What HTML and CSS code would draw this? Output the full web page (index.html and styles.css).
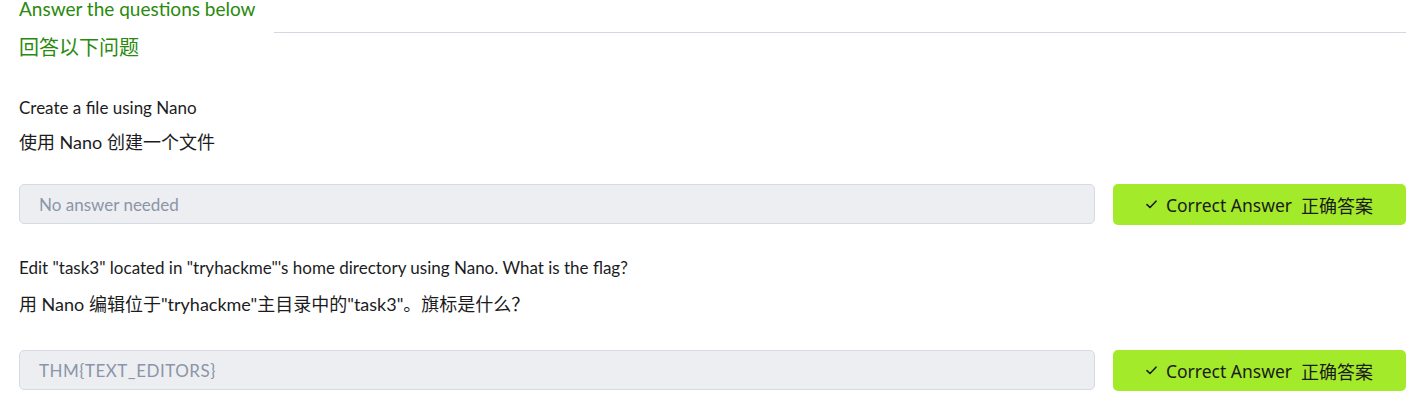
FILE: index.html
```html
<!DOCTYPE html>
<html lang="en">
<head>
<meta charset="utf-8">
<title>Answer the questions below</title>
<link rel="stylesheet" href="styles.css">
</head>
<body>
<div class="panel">
  <div class="head-row">
    <div class="head-title">Answer the questions below</div>
    <div class="head-rule"></div>
  </div>
  <div class="head-cn">回答以下问题</div>

  <div class="question q1">
    <p class="q-en">Create a file using Nano</p>
    <p class="q-cn">使用 Nano 创建一个文件</p>
    <div class="answer-row">
      <div class="answer-input placeholder">No answer needed</div>
      <button class="answer-btn" type="button">
        <svg class="check" width="11" height="9" viewBox="0 0 11 9"><path d="M1 4.6 L4 7.5 L10 1.2" fill="none" stroke="#1b1b1b" stroke-width="1.6" stroke-linecap="round" stroke-linejoin="round"/></svg>
        <span class="btn-en">Correct Answer</span><span class="btn-cn">正确答案</span>
      </button>
    </div>
  </div>

  <div class="question q2">
    <p class="q-en">Edit "task3" located in "tryhackme"'s home directory using Nano. What is the flag?</p>
    <p class="q-cn">用 Nano 编辑位于"tryhackme"主目录中的"task3"。旗标是什么？</p>
    <div class="answer-row">
      <div class="answer-input flag">THM{TEXT_EDITORS}</div>
      <button class="answer-btn" type="button">
        <svg class="check" width="11" height="9" viewBox="0 0 11 9"><path d="M1 4.6 L4 7.5 L10 1.2" fill="none" stroke="#1b1b1b" stroke-width="1.6" stroke-linecap="round" stroke-linejoin="round"/></svg>
        <span class="btn-en">Correct Answer</span><span class="btn-cn">正确答案</span>
      </button>
    </div>
  </div>
</div>
</body>
</html>
```
FILE: styles.css
```css
html, body {
  margin: 0;
  padding: 0;
  background: #ffffff;
}
body {
  font-family: "Lato", "Noto Sans CJK SC", sans-serif;
  color: #1c1c1e;
}
.panel {
  padding: 0 17px 0 19px;
}
.head-row {
  display: flex;
  align-items: flex-end;
  height: 33px;
}
.head-title {
  font-size: 19px;
  line-height: 17px;
  color: #2a8a0e;
  align-self: flex-start;
  margin-top: 0;
}
.head-rule {
  flex: 1;
  margin-left: 18px;
  border-bottom: 1px solid #d3d9e3;
}
.head-cn {
  font-size: 20px;
  line-height: 26px;
  color: #2a8a0e;
  margin-top: 1px;
}
.question {
  display: flex;
  flex-direction: column;
}
.q-en {
  margin: 0;
  font-size: 17px;
  line-height: 24px;
}
.q-cn {
  margin: 0;
  font-size: 18px;
  line-height: 26px;
}
.q1 { margin-top: 36px; }
.q1 .q-cn { margin-top: 9px; }
.q1 .answer-row { margin-top: 29px; }
.q2 { margin-top: 31px; }
.q2 .q-cn { margin-top: 11px; }
.q2 .answer-row { margin-top: 33px; }
.answer-row {
  display: flex;
  gap: 18px;
}
.answer-input {
  flex: 1;
  height: 40px;
  box-sizing: border-box;
  background: #eceef2;
  border: 1px solid #d6dbe3;
  border-radius: 5px;
  padding: 0 19px;
  display: flex;
  align-items: center;
  font-size: 17px;
  color: #8b95a7;
}
.answer-input.flag {
  letter-spacing: 0.5px;
}
.answer-btn {
  width: 293px;
  height: 41px;
  box-sizing: border-box;
  border: none;
  border-radius: 5px;
  background: #a3ea2a;
  display: flex;
  align-items: center;
  justify-content: center;
  font-family: "Noto Sans", "Noto Sans CJK SC", sans-serif;
  color: #1b1b1b;
  padding: 0;
  cursor: pointer;
}
.check {
  display: block;
  margin-right: 9px;
}
.btn-en {
  font-size: 17.5px;
}
.btn-cn {
  font-size: 18px;
  margin-left: 9px;
}
```
